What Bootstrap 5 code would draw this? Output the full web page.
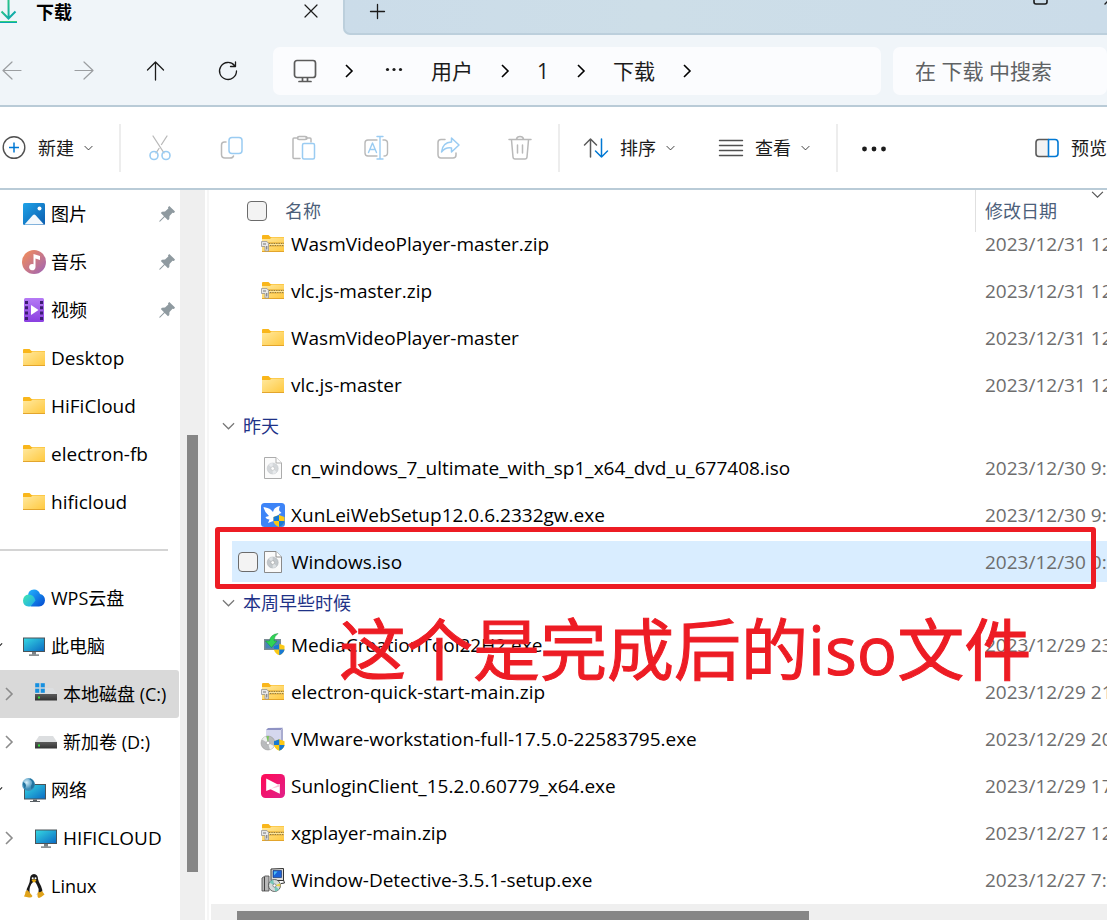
<!DOCTYPE html>
<html lang="zh-CN">
<head>
<meta charset="utf-8">
<meta name="viewport" content="width=device-width, initial-scale=1">
<title>下载</title>
<link href="https://cdn.jsdelivr.net/npm/bootstrap@5.3.0/dist/css/bootstrap.min.css" rel="stylesheet">
<style>
  body { font-family: "Open Sans", "Noto Sans CJK SC", sans-serif; font-size: 18px; line-height: 26px; color: #000; background: #fff; }
  svg { display: block; flex: none; overflow: visible; }
  .ic { width: 24px; height: 24px; }
  .line-ic { fill: none; stroke: currentColor; stroke-linecap: round; stroke-linejoin: round; }
  .plain-btn { border: 0; background: none; padding: 0; color: #1b1b1b; display: flex; align-items: center; justify-content: center; flex: none; }
  .tab-strip { height: 35px; background: #f0f5f9; }
  .tab-active { width: 343px; height: 24px; padding-right: 21px; }
  .tab-active .fw-bold { margin-left: 18px; }
  .tab-rest { background: linear-gradient(90deg, #cbdce9, #cddee8 40%, #cbdce9); border: solid #bccfdc; border-width: 0 0 2px 2px; border-bottom-left-radius: 7px; height: 35px; }
  .tab-rest .plain-btn { height: 24px; }
  .nav-strip { height: 72px; background: #f0f5f9; border-bottom: 2px solid #b9cbd7; padding-top: 12px; }
  .nav-btn { width: 72px; height: 48px; }
  .nav-btns { margin-left: -24px; width: 297px; flex: none; }
  .nav-btns .off { color: #9b9ea1; }
  .field-box { background: #fbfcfe; border-radius: 7px; height: 48px; font-size: 21px; }
  .addr { padding-left: 20px; }
  .addr a { color: #1b1b1b; text-decoration: none; }
  .addr .sep { width: 12px; height: 14px; margin: 0 26px; }
  .addr .dots { width: 26px; height: 6px; }
  .addr .host { color: #5b5b5b; }
  .search-box { width: 214px; margin-left: 12px; }
  .search-box input { border: 0; background: none; width: 100%; height: 48px; padding: 0 0 0 22px; outline: 0; color: #1b1b1b; }
  .search-box input::placeholder { color: #5f6264; opacity: 1; }
  .tools { height: 83px; border-bottom: 2px solid #b9cbd7; }
  .tools .tool { width: 72px; height: 48px; }
  .tools .label { margin: 0 10px 0 12px; }
  .tools .down { width: 9px; height: 8px; }
  .tools .btn-view { margin-left: 44px; }
  .rule { width: 2px; height: 48px; background: #ededed; flex: none; }
  .rule-gap { margin-left: 26px; }
  .grp-tools { margin: 0 2px 0 3px; }
  .side { width: 180px; flex: none; overflow: hidden; }
  .side-row { height: 48px; display: flex; align-items: center; gap: 5px; color: #000; text-decoration: none; padding-left: 22px; position: relative; white-space: nowrap; }
  .side-row.latin { font-size: 19px; }
  .side-row.deep { padding-left: 34px; }
  .side-row.picked { background: #d9d9d9; border-radius: 0 3px 3px 0; margin-right: 1px; }
  .side-row .pin { width: 16px; height: 16px; margin: 0 5px 0 auto; }
  .side-row .twist { position: absolute; left: 3px; width: 12px; height: 14px; color: #8c8c8c; }
  .side-row .twist-leaf { left: -9px; width: 12px; height: 10px; color: #bbb; }
  .side-row .twist-open { position: absolute; left: -9px; width: 12px; height: 12px; color: #222; }
  .side-line { height: 48px; display: flex; align-items: center; padding-right: 12px; }
  .side-line hr { width: 100%; margin: 0; border-top: 2px solid #d4d4d4; opacity: 1; }
  .vbar { width: 25px; background: #efefef; flex: none; padding: 0 7px; }
  .thumb { background: #868686; }
  .pane { margin-left: 2px; border-left: 2px solid #f6f6f6; min-width: 0; }
  .files { width: 100%; table-layout: fixed; border-collapse: collapse; }
  .files th, .files td { padding: 0; font-weight: 400; }
  .files .when { width: 132px; }
  .files thead div { height: 30px; line-height: 42px; color: #4c607a; }
  .files thead .date-h { border-left: 1px solid #e0e0e0; height: 42px; margin-bottom: -12px; padding-left: 9px; }
  .files thead .date-h .chev { position: absolute; right: 3px; top: 0; color: #555; }
  .head-name { padding-left: 38px; display: flex; align-items: center; gap: 18px; }
  .head-name label, .head-name input { margin-top: 12px; }
  .head-name label { line-height: 26px; }
  input.tick { appearance: none; width: 20px; height: 20px; border: 1px solid #6b6b6b; border-radius: 4px; background: #f3f3f3; flex: none; }
  .cell { height: 41px; margin: 3px 0; display: flex; align-items: center; white-space: nowrap; font-size: 19px; }
  .cell-name { margin-left: 23px; padding-left: 29px; gap: 6px; }
  .cell-date { padding-left: 10px; color: #6d6d6d; overflow: hidden; }
  .chosen .cell { background: #d9edff; }
  .chosen .cell-name { padding-left: 6px; gap: 3px; }
  .chosen .cell-name label { margin-left: 3px; }
  .group { height: 36px; display: flex; align-items: center; gap: 8px; padding-left: 13px; color: #1e3287; }
  .group svg { color: #777; }
  .hbar { height: 16px; background: #efefef; margin-left: 2px; padding-top: 7px; }
  .hbar .thumb { height: 9px; }
  .frame { position: absolute; left: 6px; right: 11px; top: 337px; height: 62px; border: 5px solid #ed1c24; border-radius: 3px; pointer-events: none; }
  .note { position: absolute; left: 130px; top: 413px; font-size: 67px; line-height: 92px; color: #ed1c24; -webkit-text-stroke: 1px #ed1c24; white-space: nowrap; pointer-events: none; }
</style>
<script src="https://cdn.jsdelivr.net/npm/bootstrap@5.3.0/dist/js/bootstrap.bundle.min.js"></script>
</head>
<body class="vh-100 overflow-hidden d-flex flex-column">

<svg width="0" height="0" class="position-absolute" aria-hidden="true">
  <defs>
    <linearGradient id="gFold" x1="0" y1="0" x2="1" y2="1"><stop offset="0" stop-color="#ffe9a0"/><stop offset="1" stop-color="#ffc83d"/></linearGradient>
    <linearGradient id="gPic" x1="0" y1="0" x2="1" y2="1"><stop offset="0" stop-color="#1fa3e8"/><stop offset="1" stop-color="#0b5cae"/></linearGradient>
    <linearGradient id="gMus" x1="0" y1="0" x2="1" y2="1"><stop offset="0" stop-color="#f78f55"/><stop offset="1" stop-color="#9d63b8"/></linearGradient>
    <linearGradient id="gVid" x1="0" y1="0" x2="0" y2="1"><stop offset="0" stop-color="#b57af5"/><stop offset="1" stop-color="#8a3fe0"/></linearGradient>
    <linearGradient id="gScr" x1="0" y1="0" x2="1" y2="1"><stop offset="0" stop-color="#35d6e2"/><stop offset="1" stop-color="#0b6cc4"/></linearGradient>
    <linearGradient id="gDrv" x1="0" y1="0" x2="0" y2="1"><stop offset="0" stop-color="#5c5c5c"/><stop offset="1" stop-color="#333"/></linearGradient>
    <linearGradient id="gCl" x1="0" y1="0" x2="1" y2="1"><stop offset="0" stop-color="#23b5ff"/><stop offset="1" stop-color="#0448cf"/></linearGradient>
    <linearGradient id="gCl2" x1="0" y1="0" x2="1" y2="1"><stop offset="0" stop-color="#3fe8b0"/><stop offset="1" stop-color="#1fa6ee"/></linearGradient>
    <linearGradient id="gSun" x1="0" y1="0" x2="1" y2="1"><stop offset="0" stop-color="#ff0a55"/><stop offset="1" stop-color="#e0218a"/></linearGradient>
    <linearGradient id="gDl" x1="0" y1="0" x2="1" y2="1"><stop offset="0" stop-color="#35cf7a"/><stop offset="1" stop-color="#0aa3b4"/></linearGradient>
    <radialGradient id="gGlobe" cx=".35" cy=".35"><stop offset="0" stop-color="#d8f0fb"/><stop offset="1" stop-color="#3d8db8"/></radialGradient>

    <symbol id="folder" viewBox="0 0 24 24"><path d="M1 4Q1 3 2 3H7.500L9.500 5H23V9H1Z" fill="#f9b61b"/><path d="M1 7H9L10.500 5.500H23V20H1Z" fill="url(#gFold)"/><path d="M1 19.500H23" stroke="#e3a52c"/></symbol>
    <symbol id="zip" viewBox="0 0 24 24"><use href="#folder"/><path d="M1 10H23V15H1Z" fill="#f0c04e"/><path d="M8 11.500H23M9 13.500H23" stroke="#8d7a48" stroke-width="1.200" stroke-dasharray="1.200 1.200"/><path d="M8 12.500H23" stroke="#ffefb0" stroke-width=".8"/><path d="M.5 9.500H6L7.500 11.500V19H4V14.500H.5Z" fill="#e8e8e8" stroke="#989898" stroke-width=".8"/><path d="M2 12H5" stroke="#777"/><path d="M5.800 14V17.500" stroke="#666"/></symbol>
    <symbol id="shield" viewBox="0 0 12 12"><path d="M6 0L11.500 2V6Q11 10 6 12Q1 10 .5 6V2Z" fill="#fbc916"/><path d="M6 0V6H.5V2ZM6 6H11.500Q11 10 6 12Z" fill="#1779d4"/></symbol>
    <symbol id="iso" viewBox="0 0 24 24"><path d="M3.500 1.500H15L20.500 7V22.500H3.500Z" fill="#fafafa" stroke="#8a8a8a"/><path d="M15 1.500V7H20.500" fill="#fff" stroke="#8f8f8f"/><circle cx="11.700" cy="12.500" r="5.500" fill="#c2c7cb" stroke="#aeb3b8" stroke-width=".6"/><path d="M11.700 12.500L7.700 9A5.500 5.500 0 0 1 11.700 7ZM11.700 12.500L15.700 16A5.500 5.500 0 0 1 11.700 18Z" fill="#dde1e4"/><circle cx="11.700" cy="12.500" r="1.800" fill="#fff" stroke="#999" stroke-width=".5"/></symbol>
    <symbol id="screen" viewBox="0 0 24 24"><path d="M1 3.500H23V18H1Z" fill="#4b5358"/><path d="M2 4.500H22V17H2Z" fill="url(#gScr)"/><path d="M10 18H14V20.500H10Z" fill="#7a8287"/><path d="M7 20.500H17V21.700H7Z" fill="#596065"/></symbol>
    <symbol id="drive" viewBox="0 0 24 24"><path d="M5 6H19L23 12H1Z" fill="#dcdee0"/><path d="M1 12H23V18.500H1Z" fill="url(#gDrv)"/><path d="M4 14.500H6V16.500H4Z" fill="#34e03b"/></symbol>
    <symbol id="chevR" viewBox="0 0 12 14"><path d="M3 1L9 7L3 13" fill="none" stroke="currentColor" stroke-width="1.600"/></symbol>
    <symbol id="chevD" viewBox="0 0 14 10"><path d="M1 2L7 8L13 2" fill="none" stroke="currentColor" stroke-width="1.300"/></symbol>
    <symbol id="pin" viewBox="0 0 16 16"><path d="M10.300 0L16 5.500L15 7L13.500 6.800L10.500 10L10.300 13L9 14.200L5.700 11L1.200 15.500L.2 15.800L.5 14.800L5 10.300L1.800 7L3 5.800L6 5.600L9.300 2.600L9 1.200Z" fill="#8f9aa0"/></symbol>
  </defs>
</svg>

<header class="flex-shrink-0">
  <div class="tab-strip d-flex">
    <div class="tab-active d-flex align-items-center flex-shrink-0">
      <svg width="18" height="24" viewBox="0 0 18 24" fill="none" stroke="url(#gDl)" stroke-width="2"><path d="M8.500 0L8.600 18M1.500 11.500L8.500 18.500L15.500 11.500"/><path d="M0 22L17 22.100"/></svg>
      <span class="fw-bold">下载</span>
      <button class="plain-btn ms-auto p-1" aria-label="关闭标签页"><svg class="line-ic" width="14" height="14" viewBox="0 0 14 14" stroke-width="1.200"><path d="M1 0L13 12M13 0L1 12"/></svg></button>
    </div>
    <div class="tab-rest d-flex flex-grow-1 ps-4">
      <button class="plain-btn" aria-label="新建标签页"><svg class="line-ic" width="16" height="16" viewBox="0 0 16 16" stroke-width="1.300"><path d="M1.500 7.500H15.500M8.500 .5V14.500"/></svg></button>
      <button class="plain-btn ms-auto me-5 align-items-start" aria-label="最大化"><svg class="line-ic" width="16" height="6" viewBox="0 0 16 6" stroke-width="1.600"><path d="M1 -8V2Q1 4 3 4H12Q14 4 14 2V-8"/></svg></button>
      <button class="plain-btn align-items-start" aria-label="关闭"><svg class="line-ic" width="10" height="6" viewBox="0 0 10 6" stroke-width="1.400"><path d="M8 4L14 -2"/></svg></button>
    </div>
  </div>

  <nav class="nav-strip d-flex" aria-label="导航">
    <div class="nav-btns d-flex">
      <button class="plain-btn nav-btn off" aria-label="后退"><svg class="line-ic" width="20" height="20" viewBox="0 0 20 20" stroke-width="1.200"><path d="M19 9.500H1M10 1L1 9.500L10 18"/></svg></button>
      <button class="plain-btn nav-btn off" aria-label="前进"><svg class="line-ic" width="20" height="20" viewBox="0 0 20 20" stroke-width="1.200"><path d="M1 9.500H19M10 1L19 9.500L10 18"/></svg></button>
      <button class="plain-btn nav-btn" aria-label="向上"><svg class="line-ic" width="20" height="20" viewBox="0 0 20 20" stroke-width="1.300"><path d="M9.500 19V1M1.500 9L9.500 1L17.500 9"/></svg></button>
      <button class="plain-btn nav-btn" aria-label="刷新"><svg class="line-ic" width="20" height="20" viewBox="0 0 20 20" stroke-width="1.300"><path d="M16.500 4.500A8.500 8.500 0 1 0 18.500 10M17.500 1V5.500H12.500"/></svg></button>
    </div>
    <div class="field-box addr d-flex align-items-center flex-grow-1">
      <svg class="line-ic host" width="24" height="24" viewBox="0 0 24 24" stroke-width="1.700"><rect x="1.500" y="1.500" width="21" height="17" rx="2.500"/><path d="M9.500 19V22M14.500 19V22M6 22.500H18"/></svg>
      <svg class="sep"><use href="#chevR"/></svg>
      <svg viewBox="0 0 26 6" class="dots me-4"><g fill="#1b1b1b"><circle cx="6.500" cy="1.500" r="1.600"/><circle cx="13" cy="1.500" r="1.600"/><circle cx="19.500" cy="1.500" r="1.600"/></g></svg>
      <a href="#">用户</a>
      <svg class="sep"><use href="#chevR"/></svg>
      <a href="#">1</a>
      <svg class="sep"><use href="#chevR"/></svg>
      <a href="#">下载</a>
      <svg class="sep"><use href="#chevR"/></svg>
    </div>
    <div class="field-box search-box flex-shrink-0"><input type="text" aria-label="搜索" placeholder="在 下载 中搜索"></div>
  </nav>

  <div class="tools d-flex align-items-center" role="toolbar">
    <button class="plain-btn">
      <svg width="26" height="24" viewBox="0 0 26 24" fill="none"><circle cx="14" cy="11.500" r="10.800" stroke="#505050" stroke-width="1.400"/><path d="M9 11.500H19M14 6.500V16.500" stroke="#0078d4" stroke-width="1.500"/></svg>
      <span class="label">新建</span><svg class="down"><use href="#chevD"/></svg>
    </button>
    <span class="rule rule-gap"></span>
    <div class="d-flex grp-tools">
      <button class="plain-btn tool" aria-label="剪切"><svg class="line-ic ic" viewBox="0 0 24 24" stroke-width="1.300"><path d="M5 0L16 17M19 0L13.500 8.500M11 12.500L8 17" style="stroke:#b9b9b9"/><g style="stroke:#9accf2" stroke-width="1.600"><circle cx="6" cy="19.500" r="4"/><circle cx="18" cy="19.500" r="4"/></g></svg></button>
      <button class="plain-btn tool" aria-label="复制"><svg class="line-ic ic" viewBox="0 0 24 24" stroke-width="1.500"><path d="M6 6H4.500Q1.500 6 1.500 9V18.500Q1.500 22 5 22H10Q13 22 13.500 20" style="stroke:#b9b9b9"/><rect x="9" y="1.500" width="13" height="16" rx="3" style="stroke:#9accf2"/></svg></button>
      <button class="plain-btn tool" aria-label="粘贴"><svg class="line-ic ic" viewBox="0 0 24 24" stroke-width="1.500"><path d="M8 22.500H2Q1 22.500 1 21.500V3Q1 2 2 2H6M14 2H18Q19 2 19 3V6M7 .5H13Q15 .5 15 2T13 3.500H7Q5.500 3.500 5.500 2T7 .5Z" style="stroke:#b9b9b9"/><rect x="10.500" y="7.500" width="12" height="15.500" rx="1.500" style="stroke:#9accf2"/></svg></button>
      <button class="plain-btn tool" aria-label="重命名"><svg class="line-ic ic" viewBox="0 0 24 24" stroke-width="1.400"><path d="M13 20H4Q1 20 1 17V7Q1 4 4 4H13M19 4H21Q23.500 4.500 23.500 7V17Q23.500 20 20 20" style="stroke:#b9b9b9"/><path d="M4.500 16.500L8.500 7L12.500 16.500M6 13.500H11M16 .5V23M13 .5H19M13 23H19" style="stroke:#9accf2"/></svg></button>
      <button class="plain-btn tool" aria-label="共享"><svg class="line-ic ic" viewBox="0 0 24 24" stroke-width="1.500"><path d="M9 3.500H5Q2 3.500 2 6.500V18.500Q2 22 5 22H17Q20 22 20 19V17" style="stroke:#b9b9b9"/><path d="M15.500 2L23 9L15.500 16V12Q9.500 11 5.500 16Q6.500 6.500 15.500 6Z" style="stroke:#9accf2"/></svg></button>
      <button class="plain-btn tool" aria-label="删除"><svg class="line-ic ic" viewBox="0 0 24 24" stroke-width="1.500" style="color:#b9b9b9"><path d="M1 3.500H23M3.500 4L5 21Q5.200 23 7 23H17Q18.800 23 19 21L20.500 4M8.500 3Q9 .5 12 .5T15.500 3M9.500 9V17M14.500 9V17"/></svg></button>
    </div>
    <span class="rule"></span>
    <button class="plain-btn ms-4">
      <svg class="line-ic ic" viewBox="0 0 24 24" stroke-width="1.500"><path d="M6.500 21V3M.5 9L6.500 3L12.500 9" style="stroke:#5a5a5a"/><path d="M17.500 3V21M11.500 15L17.500 21L23.500 15" style="stroke:#0078d4"/></svg>
      <span class="label">排序</span><svg class="down"><use href="#chevD"/></svg>
    </button>
    <button class="plain-btn btn-view">
      <svg class="line-ic ic" viewBox="0 0 24 24" stroke-width="1.400" style="color:#505050"><path d="M.5 4.500H23.500M.5 9.500H23.500M.5 14.500H23.500M.5 19.500H23.500"/></svg>
      <span class="label">查看</span><svg class="down"><use href="#chevD"/></svg>
    </button>
    <span class="rule rule-gap"></span>
    <button class="plain-btn ms-4" aria-label="更多"><svg width="24" height="6" viewBox="0 0 24 6"><g fill="#1b1b1b"><circle cx="2.500" cy="4" r="2.400"/><circle cx="12" cy="4" r="2.400"/><circle cx="21.500" cy="4" r="2.400"/></g></svg></button>
    <button class="plain-btn ms-auto">
      <svg class="line-ic ic" viewBox="0 0 24 24" stroke-width="1.600"><path d="M13.500 3.500H4Q1 3.500 1 6.500V17.500Q1 20.500 4 20.500H13.500" style="stroke:#5a5a5a;fill:#f3f3f3"/><path d="M13.500 3.500H20Q23 3.500 23 6.500V17.500Q23 20.500 20 20.500H13.500Z" style="stroke:#0078d4"/></svg>
      <span class="ms-2 ps-1">预览</span>
    </button>
  </div>
</header>

<div class="d-flex flex-grow-1 overflow-hidden">
  <nav class="side" aria-label="文件夹">
    <a class="side-row" href="#"><svg class="ic" viewBox="0 0 24 24"><rect x="1" y="1" width="22" height="22" rx="1.500" fill="url(#gPic)"/><path d="M2.500 22.500L11 13Q12.200 12 13.400 13L22 22.500Z" fill="#f3f8fc"/><circle cx="17.500" cy="6.500" r="2" fill="#fff"/></svg>图片<svg class="pin"><use href="#pin"/></svg></a>
    <a class="side-row" href="#"><svg class="ic" viewBox="0 0 24 24"><circle cx="12" cy="12" r="12" fill="url(#gMus)"/><path d="M11.500 4L18 6V10L13.500 8.500V17A3.200 3.200 0 1 1 11.500 14.200Z" fill="#fff"/></svg>音乐<svg class="pin"><use href="#pin"/></svg></a>
    <a class="side-row" href="#"><svg class="ic" viewBox="0 0 24 24"><rect x="2" y="0" width="20" height="24" rx="1.500" fill="url(#gVid)"/><path d="M4.500 3V22M19.500 3V22" stroke="#3c1d72" stroke-width="3" stroke-dasharray="3 2.300"/><path d="M9 7V17L16.500 12Z" fill="#fff"/></svg>视频<svg class="pin"><use href="#pin"/></svg></a>
    <a class="side-row latin" href="#"><svg class="ic"><use href="#folder"/></svg>Desktop</a>
    <a class="side-row latin" href="#"><svg class="ic"><use href="#folder"/></svg>HiFiCloud</a>
    <a class="side-row latin" href="#"><svg class="ic"><use href="#folder"/></svg>electron-fb</a>
    <a class="side-row latin" href="#"><svg class="ic"><use href="#folder"/></svg>hificloud</a>
    <div class="side-line"><hr></div>
    <a class="side-row" href="#"><svg class="twist twist-leaf"><use href="#chevR"/></svg><svg class="ic" viewBox="0 0 24 24"><path d="M6 10Q6 3.500 12 3.500Q16.500 3.500 18 8Q23 9 23 14.500Q22.500 20 17 20.500H9Z" fill="url(#gCl)"/><path d="M6.500 20.500Q1 20 1 14.500Q1.500 9 6.500 8.500Q12 8.500 13.500 14.500L8.500 20.500Z" fill="url(#gCl2)"/></svg>WPS云盘</a>
    <a class="side-row" href="#"><svg class="twist-open"><use href="#chevD"/></svg><svg class="ic"><use href="#screen"/></svg>此电脑</a>
    <a class="side-row deep picked" href="#"><svg class="twist"><use href="#chevR"/></svg><svg class="ic" viewBox="0 0 24 24"><use href="#drive"/><path d="M1 1H5.500V5.500H1ZM6.500 1H11V5.500H6.500ZM1 6.500H5.500V11H1ZM6.500 6.500H11V11H6.500Z" fill="#1690e0" stroke="#d9d9d9" stroke-width=".4"/></svg>本地磁盘 (C:)</a>
    <a class="side-row deep" href="#"><svg class="twist"><use href="#chevR"/></svg><svg class="ic"><use href="#drive"/></svg>新加卷 (D:)</a>
    <a class="side-row" href="#"><svg class="twist-open"><use href="#chevD"/></svg><svg class="ic" viewBox="0 0 24 24"><path d="M2 6H24V21.500H2Z" fill="#4b5358"/><path d="M3 7H23V20.500H3Z" fill="url(#gScr)"/><path d="M11 21.500H15V23H8V24H18V23H11Z" fill="#596065"/><circle cx="6.500" cy="6.500" r="6.500" fill="url(#gGlobe)"/><path d="M7 1Q11 3 10 6Q8 8 9 11Q12 10 12.500 7Q12.500 3 8.500 .5ZM1 4Q4 5 4 8Q3 9 3.500 11Q.5 8.500 1 4Z" fill="#22739f"/></svg>网络</a>
    <a class="side-row latin deep" href="#"><svg class="twist"><use href="#chevR"/></svg><svg class="ic"><use href="#screen"/></svg>HIFICLOUD</a>
    <a class="side-row" href="#"><svg class="twist twist-leaf"><use href="#chevR"/></svg><svg class="ic" viewBox="0 0 24 24"><path d="M12 0Q16 .5 16 5Q16.500 8 19 12Q21 16 20 19L12 21L4.500 19Q4 15 6.500 11Q8 8 8 5Q8 .5 12 0Z" fill="#1a1a1a"/><path d="M12 7Q14 8.500 15 11Q17.500 15 16.500 19Q14 22.500 9 21.500Q6.500 18 8 13Q9 9.500 12 7Z" fill="#fff"/><path d="M9.500 6Q12 4.500 14.500 6Q13 8.500 12 8.500T9.500 6Z" fill="#e8a90c"/><circle cx="10.700" cy="4.300" r="1" fill="#fff"/><circle cx="13.500" cy="4.300" r="1" fill="#fff"/><path d="M5.500 16L10.500 22Q9.500 24 7 23.500L2 22.500Q3.500 19.500 3.500 17.500ZM16 17.500Q18 19 20 17L22.500 20.500Q19 23.500 17 24Q14.500 23.500 16 17.500Z" fill="#e0a31a"/></svg>Linux</a>
  </nav>
  <div class="vbar"><div style="height:33.600%"></div><div class="thumb" style="height:59.800%"></div></div>

  <main class="pane position-relative flex-grow-1 d-flex flex-column">
    <div class="flex-grow-1 overflow-hidden">
      <table class="files">
        <thead><tr>
          <th><div class="head-name"><input class="tick" type="checkbox" id="all"><label for="all">名称</label></div></th>
          <th class="when"><div class="date-h position-relative">修改日期<svg class="chev" width="13" height="9"><use href="#chevD"/></svg></div></th>
        </tr></thead>
        <tbody>
          <tr><td><div class="cell cell-name"><svg class="ic"><use href="#zip"/></svg>WasmVideoPlayer-master.zip</div></td><td><div class="cell cell-date">2023/12/31 12:08</div></td></tr>
          <tr><td><div class="cell cell-name"><svg class="ic"><use href="#zip"/></svg>vlc.js-master.zip</div></td><td><div class="cell cell-date">2023/12/31 12:08</div></td></tr>
          <tr><td><div class="cell cell-name"><svg class="ic"><use href="#folder"/></svg>WasmVideoPlayer-master</div></td><td><div class="cell cell-date">2023/12/31 12:08</div></td></tr>
          <tr><td><div class="cell cell-name"><svg class="ic"><use href="#folder"/></svg>vlc.js-master</div></td><td><div class="cell cell-date">2023/12/31 12:08</div></td></tr>
          <tr><th colspan="2" scope="rowgroup"><div class="group"><svg width="13" height="10"><use href="#chevD"/></svg>昨天</div></th></tr>
          <tr><td><div class="cell cell-name"><svg class="ic" opacity=".7"><use href="#iso"/></svg>cn_windows_7_ultimate_with_sp1_x64_dvd_u_677408.iso</div></td><td><div class="cell cell-date">2023/12/30 9:40</div></td></tr>
          <tr><td><div class="cell cell-name"><svg class="ic" viewBox="0 0 24 24"><rect width="24" height="24" rx="3.500" fill="#3d84f7"/><path d="M2.500 4L6.500 5Q10 6 12 9Q13 4 19 3Q17.500 6 18.500 8L20.500 10L18 11Q17 17 11 18.500L7 20L8.500 16.500Q5 16 4.500 14L8 13Q3.500 9.500 2.500 4Z" fill="#fff"/><use href="#shield" x="12" y="12" width="12" height="12"/></svg>XunLeiWebSetup12.0.6.2332gw.exe</div></td><td><div class="cell cell-date">2023/12/30 9:36</div></td></tr>
          <tr class="chosen"><td><div class="cell cell-name"><input class="tick" type="checkbox" id="win"><svg class="ic"><use href="#iso"/></svg><label for="win">Windows.iso</label></div></td><td><div class="cell cell-date">2023/12/30 0:12</div></td></tr>
          <tr><th colspan="2" scope="rowgroup"><div class="group"><svg width="13" height="10"><use href="#chevD"/></svg>本周早些时候</div></th></tr>
          <tr><td><div class="cell cell-name"><svg class="ic" viewBox="0 0 24 24"><path d="M3 6H20V17H3Z" fill="#7b8a94"/><path d="M4.500 7.500H18.500V15.500H4.500Z" fill="#4785b8"/><path d="M17 .5Q9 1.500 8.500 8H4.500L10.500 14.500L16 8H13Q13 3 17 .5Z" fill="#2fd455" stroke="#12923a" stroke-width=".5"/><use href="#shield" x="12.500" y="10.500" width="11.500" height="12"/></svg>MediaCreationTool22H2.exe</div></td><td><div class="cell cell-date">2023/12/29 23:10</div></td></tr>
          <tr><td><div class="cell cell-name"><svg class="ic"><use href="#zip"/></svg>electron-quick-start-main.zip</div></td><td><div class="cell cell-date">2023/12/29 21:30</div></td></tr>
          <tr><td><div class="cell cell-name"><svg class="ic" viewBox="0 0 24 24"><path d="M7 1L22 .8L20 3H5Z" fill="#8f93c4"/><path d="M5 3H20V15H5Z" fill="#d5d7ee"/><path d="M20 3L22 1V14L20 16Z" fill="#a9accf"/><circle cx="7" cy="16" r="7" fill="#b9bbbd" stroke="#8e8e8e" stroke-width=".5"/><path d="M7 16L1 12.500A7 7 0 0 1 5 9.300ZM7 16L13 19A7 7 0 0 1 9 22.700Z" fill="#eef0f0"/><path d="M7 16L5.500 9.200L8 9Z" fill="#7bc65a"/><circle cx="7" cy="16" r="1.800" fill="#fff" stroke="#888" stroke-width=".5"/><use href="#shield" x="12.500" y="12" width="11.500" height="12"/></svg>VMware-workstation-full-17.5.0-22583795.exe</div></td><td><div class="cell cell-date">2023/12/29 20:15</div></td></tr>
          <tr><td><div class="cell cell-name"><svg class="ic" viewBox="0 0 24 24"><rect width="24" height="24" rx="4.500" fill="url(#gSun)"/><path d="M18.800 10V19.800L6 13.500Z" fill="#fff"/><path d="M5.200 4.500L18.800 11.500L5.200 17Z" fill="#fff"/><path d="M10 14.800L18.800 10V12.500Z" fill="#f9c3d8"/></svg>SunloginClient_15.2.0.60779_x64.exe</div></td><td><div class="cell cell-date">2023/12/29 17:20</div></td></tr>
          <tr><td><div class="cell cell-name"><svg class="ic"><use href="#zip"/></svg>xgplayer-main.zip</div></td><td><div class="cell cell-date">2023/12/27 12:02</div></td></tr>
          <tr><td><div class="cell cell-name"><svg class="ic" viewBox="0 0 24 24"><path d="M1 10L4 8H8V23H1Z" fill="#b9b9b9" stroke="#444" stroke-width=".8"/><path d="M3.500 9V23" stroke="#444"/><path d="M10 1L22.500 .5V12.500H10Z" fill="#dcdcdc" stroke="#333"/><path d="M12 2.500H20.500V9.500H12Z" fill="#1c62d8" stroke="#0b2b66" stroke-width=".6"/><path d="M13 3.500H16.500L13 7.500Z" fill="#4fc0f5"/><circle cx="13.500" cy="17.500" r="6" fill="#d6dcda" stroke="#444" stroke-width=".8"/><path d="M13.500 17.500L8.500 14.500A6 6 0 0 1 12 11.700ZM13.500 17.500L18 21.500A6 6 0 0 1 14 23.400Z" fill="#76c8b9"/><path d="M13.500 17.500L19 15.500A6 6 0 0 1 19.400 18.500Z" fill="#e9d648"/><circle cx="13.500" cy="17.500" r="1.600" fill="#fff" stroke="#555" stroke-width=".6"/><path d="M22.500 12L23.500 15L20 15.500" fill="none" stroke="#333"/></svg>Window-Detective-3.5.1-setup.exe</div></td><td><div class="cell cell-date">2023/12/27 7:45</div></td></tr>
        </tbody>
      </table>
    </div>
    <div class="hbar d-flex flex-shrink-0"><div style="width:2.900%"></div><div class="thumb" style="width:63.800%"></div></div>
    <div class="frame"></div>
    <div class="note">这个是完成后的iso文件</div>
  </main>
</div>
</body>
</html>
